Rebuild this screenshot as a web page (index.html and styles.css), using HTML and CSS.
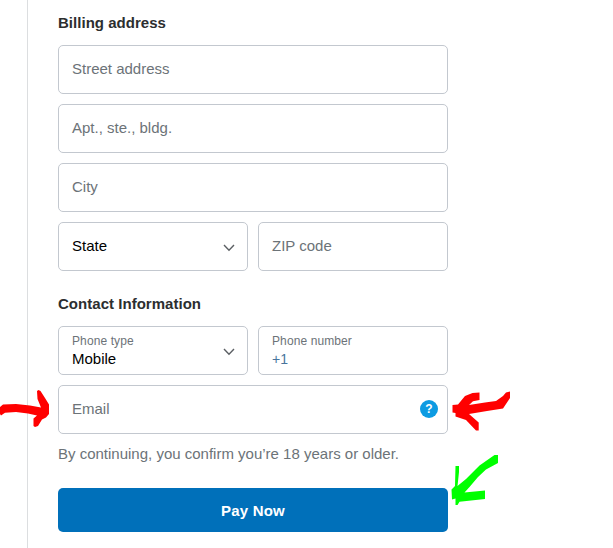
FILE: index.html
```html
<!DOCTYPE html>
<html lang="en">
<head>
    <meta charset="UTF-8">
    <meta name="viewport" content="width=device-width, initial-scale=1.0">
    <title>Checkout</title>
    <link rel="stylesheet" href="styles.css">
</head>
<body>
    <main class="checkout">
        <form class="payment-form">
            <h2>Billing address</h2>
            <div class="form-group">
                <div class="field"><span class="placeholder">Street address</span></div>
                <div class="field"><span class="placeholder">Apt., ste., bldg.</span></div>
                <div class="field"><span class="placeholder">City</span></div>
                <div class="row">
                    <div class="field select">
                        <span class="value">State</span>
                        <svg class="chevron" viewBox="0 0 12 8"><path d="M1 1l5 5.2L11 1"/></svg>
                    </div>
                    <div class="field"><span class="placeholder">ZIP code</span></div>
                </div>
            </div>

            <h2>Contact Information</h2>
            <div class="form-group">
                <div class="row">
                    <div class="field select filled">
                        <div>
                            <span class="label">Phone type</span>
                            <span class="value">Mobile</span>
                        </div>
                        <svg class="chevron" viewBox="0 0 12 8"><path d="M1 1l5 5.2L11 1"/></svg>
                    </div>
                    <div class="field filled">
                        <div>
                            <span class="label">Phone number</span>
                            <span class="prefix">+1</span>
                        </div>
                    </div>
                </div>
                <div class="field">
                    <span class="placeholder">Email</span>
                    <span class="help">?</span>
                </div>
            </div>

            <p class="terms">By continuing, you confirm you’re 18 years or older.</p>
            <button type="button" class="pay-button">Pay Now</button>
        </form>
    </main>

    <!-- hand-drawn arrows over the form -->
    <svg class="arrows" width="613" height="548" viewBox="0 0 613 548">
        <g fill="#ff0000">
            <path d="M0 407L3 404.500L16 404L30 405.500L41 407.500L37.500 399L37 391L38.500 390L40.500 391L45 398L49 404.500V414L46 417.500L42 419.500L38 426L35 427L33.500 426V418.500L37 415.500L28 413.500L16 412L5 412.700L1 415.500L0 414Z"/>
            <path d="M452.500 405L458 404.500L465 396L472.500 393L479.500 392.500V400L473 401.300L469 405L485 402.500L496 401L503 396L506 392.500L510 391.500V398L503 408.500L487 411L469 414L478.700 422.500V430.500H476L466 420L455.500 416.500V413L452.500 412.500Z"/>
        </g>
        <path fill="#00ff00" d="M455.500 466H459V472L457.500 486L466 479L479.500 465.500L494.500 455H498V463L486 469.500L478 477L469.500 487L464.500 492.500L485 490.500V499L459.500 501.700L457.500 505H455.500V498.500L452 499.500L451.500 489.500L455 486Z"/>
    </svg>
</body>
</html>
```

FILE: styles.css
```css
* {
    box-sizing: border-box;
}

body {
    margin: 0;
    background: #fff;
    font-family: "Liberation Sans", Arial, sans-serif;
    font-size: 15px;
    color: #2c2e2f;
}

.checkout {
    margin-left: 27px;
    min-height: 548px;
    padding: 13px 0 16px 30px;
    border-left: 1px solid #dcdee0;
}

.payment-form {
    width: 390px;
}

h2 {
    margin: 0 0 12px;
    font-size: 15px;
    line-height: 20px;
    font-weight: bold;
    letter-spacing: 0.03px;
}

.form-group {
    display: grid;
    gap: 10px;
}

.form-group + h2 {
    margin-top: 23px;
}

.row {
    display: grid;
    grid-template-columns: 1fr 1fr;
    gap: 10px;
}

.field {
    display: flex;
    align-items: center;
    justify-content: space-between;
    height: 49px;
    padding: 0 9px 0 13px;
    border: 1px solid #c3c8cf;
    border-radius: 5px;
    line-height: 18px;
}

.placeholder {
    padding-bottom: 2px;
    color: #6c7378;
}

.value {
    padding-bottom: 2px;
    color: #000;
}

.select {
    padding-right: 12px;
}

.filled .label,
.filled .value,
.filled .prefix {
    display: block;
    padding: 0;
}

.label {
    font-size: 12px;
    line-height: 16px;
    letter-spacing: 0.1px;
    color: #6c7378;
}

.filled .value,
.filled .prefix {
    margin-top: 1px;
}

.prefix {
    font-size: 14px;
    color: #48749c;
}

.chevron {
    width: 12px;
    height: 8px;
    margin-top: 2px;
    fill: none;
    stroke: #5b5f63;
    stroke-width: 1.4;
}

.help {
    width: 18px;
    height: 18px;
    margin-bottom: 2px;
    border-radius: 50%;
    background: #0d9be2;
    color: #fff;
    font-size: 12px;
    font-weight: bold;
    line-height: 18px;
    text-align: center;
}

.terms {
    margin: 10px 0 24px;
    line-height: 20px;
    color: #6c7378;
}

.pay-button {
    display: block;
    width: 100%;
    height: 44px;
    padding: 0;
    border: none;
    border-radius: 5px;
    background: #0070ba;
    color: #fff;
    font-family: inherit;
    font-size: 15px;
    font-weight: bold;
    letter-spacing: 0.2px;
}

.arrows {
    position: absolute;
    top: 0;
    left: 0;
    pointer-events: none;
}
```
